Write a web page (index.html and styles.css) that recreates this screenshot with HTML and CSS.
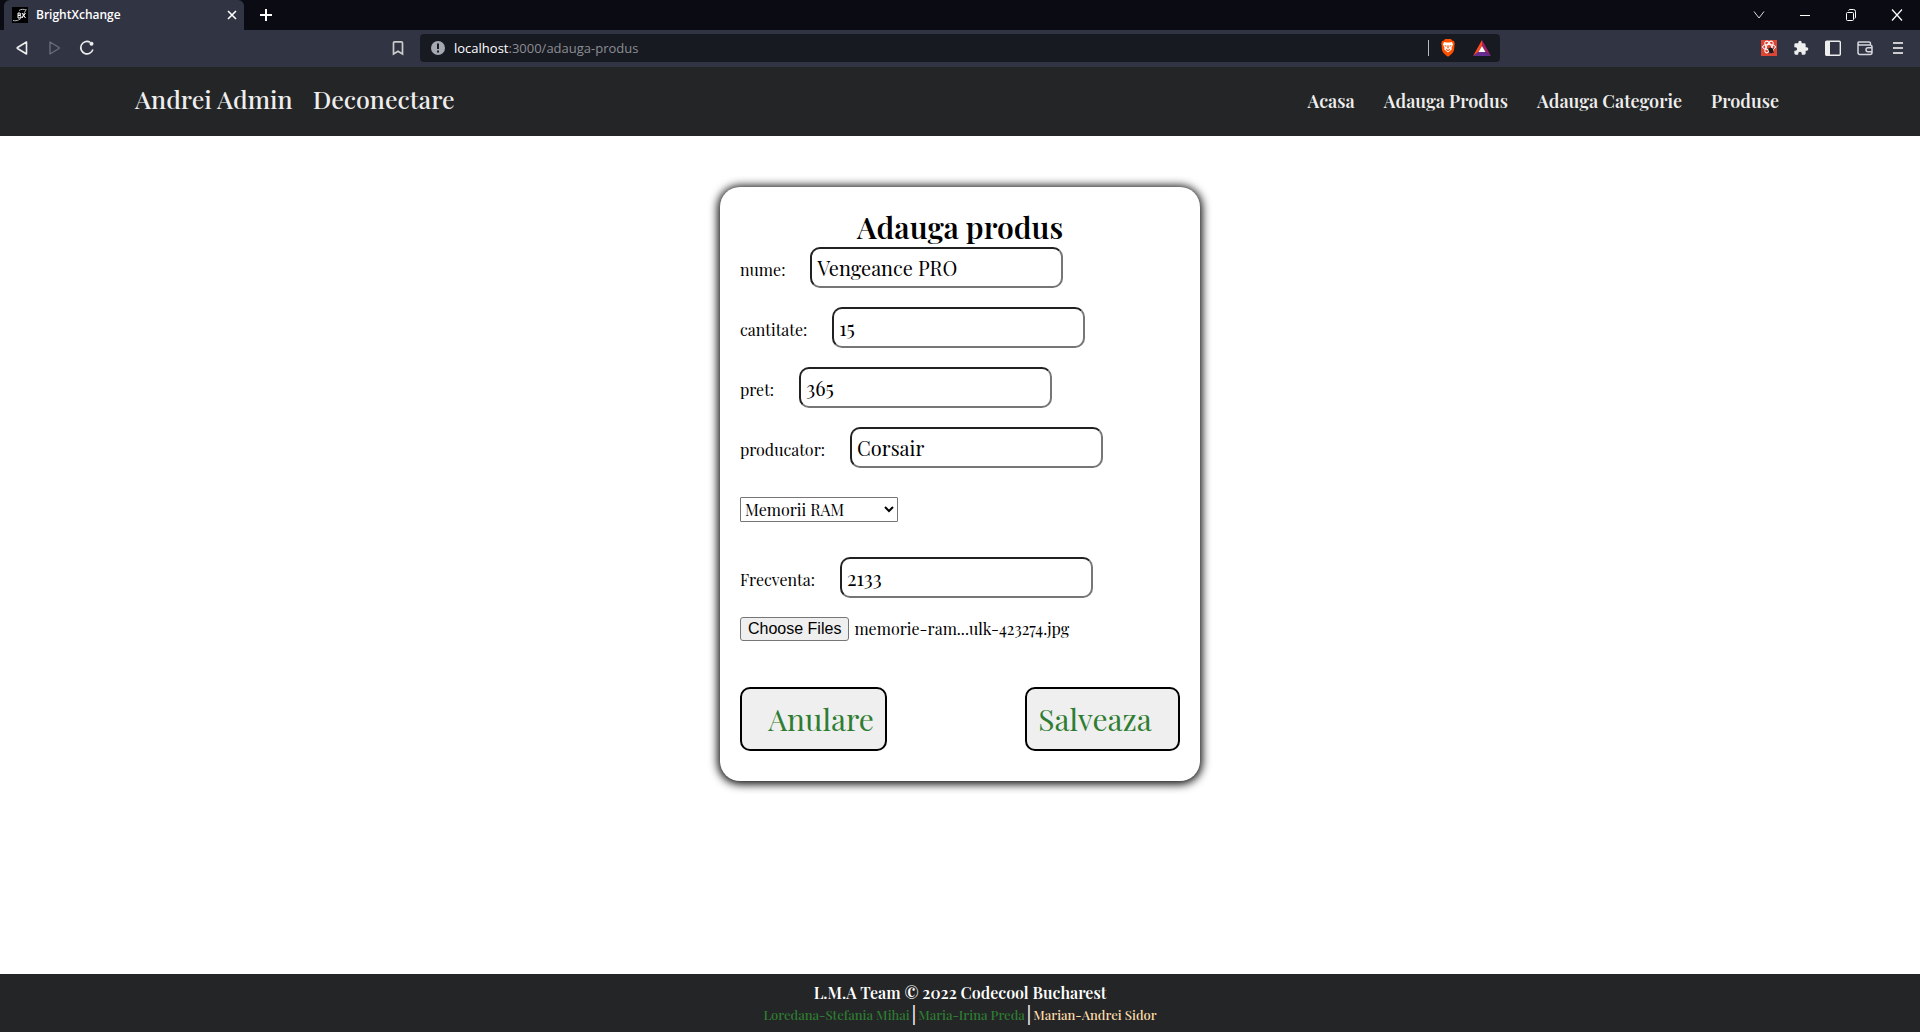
FILE: index.html
```html
<!DOCTYPE html>
<html lang="ro">
<head>
<meta charset="utf-8">
<meta name="viewport" content="width=device-width, initial-scale=1">
<title>BrightXchange</title>
<link rel="stylesheet" href="styles.css">
</head>
<body>
<div class="browser">
  <div class="tab-strip">
    <div class="tab">
      <svg class="favicon" width="16" height="16" viewBox="0 0 16 16" fill="none" aria-hidden="true">
        <rect width="16" height="16" fill="#000"/>
        <path d="M1 13.500c4 1 8-1 10-5 1-2 2-4.500 3.500-6M7 3.500c2-1.500 5-1.500 7-.500" stroke="#bbb"/>
        <path d="M6 6v5M6 6h2q1 1 0 2.300H6h2.500q1 1.500-.5 2.700H6M10 6l3.500 5M13.500 6L10 11" stroke="#fff"/>
      </svg>
      <span class="tab-title">BrightXchange</span>
      <button class="chrome-button" type="button" aria-label="Close tab">
        <svg width="10" height="10" viewBox="0 0 10 10" stroke="#fff" stroke-width="1.600"><path d="M1 1l8 8M9 1L1 9"/></svg>
      </button>
    </div>
    <button class="chrome-button new-tab" type="button" aria-label="New tab">
      <svg width="12" height="12" viewBox="0 0 12 12" stroke="#fff" stroke-width="2"><path d="M6 0v12M0 6h12"/></svg>
    </button>
    <div class="window-buttons">
      <button class="chrome-button" type="button" aria-label="Search tabs"><svg width="12" height="12" viewBox="0 0 12 12" fill="none" stroke="#ddd"><path d="M1 2.500l5 6.500 5-6.500"/></svg></button>
      <button class="chrome-button" type="button" aria-label="Minimize"><svg width="12" height="12" viewBox="0 0 12 12" stroke="#fff"><path d="M1 6.500h10"/></svg></button>
      <button class="chrome-button" type="button" aria-label="Restore"><svg width="12" height="12" viewBox="0 0 12 12" fill="none" stroke="#fff"><rect x="1.500" y="3.500" width="7" height="8" rx="1"/><path d="M3.500 1.500Q4 .5 5 .5h3.500q2 0 2 2v5.500q0 1-.7 1.500"/></svg></button>
      <button class="chrome-button" type="button" aria-label="Close"><svg width="12" height="12" viewBox="0 0 12 12" stroke="#fff" stroke-width="1.200"><path d="M1 .5l10 11M11 .5l-10 11"/></svg></button>
    </div>
  </div>
  <div class="toolbar">
    <div class="nav-buttons">
      <button class="chrome-button" type="button" aria-label="Back"><svg width="14" height="16" viewBox="0 0 14 16" fill="none" stroke="#eee" stroke-width="1.600" stroke-linejoin="round"><path d="M11.500 2v12L2.500 8.500q-.7-.5 0-1z"/></svg></button>
      <button class="chrome-button" type="button" aria-label="Forward" disabled><svg width="14" height="16" viewBox="0 0 14 16" fill="none" stroke="#6a6c7a" stroke-width="1.400" stroke-linejoin="round"><path d="M3 2v12l9-5.500q.7-.5 0-1z"/></svg></button>
      <button class="chrome-button" type="button" aria-label="Reload"><svg width="16" height="16" viewBox="0 0 16 16" fill="none" stroke="#eee" stroke-width="1.600"><path d="M11 2.200A6.200 6.200 0 1 0 13.900 9.500"/><circle cx="12.500" cy="3.800" r="2" fill="#eee" stroke="none"/></svg></button>
    </div>
    <button class="chrome-button bookmark" type="button" aria-label="Bookmark"><svg width="12" height="16" viewBox="0 0 12 16" fill="none" stroke="#ccc" stroke-width="1.700"><path d="M1.500 14V3q0-1.200 1.200-1.200h6.600q1.200 0 1.200 1.200v11L6 11.200z"/></svg></button>
    <div class="address">
      <svg width="14" height="14" viewBox="0 0 14 14" aria-hidden="true"><circle cx="7" cy="7" r="7" fill="#a5a8b0"/><path d="M6 2.500h2V8H6zM6 9.500h2v2H6z" fill="#181a20"/></svg>
      <span class="url"><span class="host">localhost</span>:3000/adauga-produs</span>
      <div class="address-end">
        <svg width="14" height="18" viewBox="0 0 14 18" aria-hidden="true"><path d="M4 0h6l1 1.500L13 2l.7 2.500L13 11q-.5 3-6 6.800Q1.500 14 1 11L.3 4.500 1 2l2-.5z" fill="#ff5000"/><path d="M3 3l2 .5h4l2-.5 1 2.500-1.500 3 .2 2L7 13.500 3.300 10.500l.2-2L2 5.500z" fill="#fff"/><path d="M3.500 6l2 .7v1l-1.500-.5zM10.500 6l-2 .7v1l1.500-.5zM6.600 6h.8l.3 3L7 9.800 6.300 9zM4.800 9.500L7 11l2.200-1.500-.4 1.500L7 12.200 5.200 11z" fill="#ff5000"/></svg>
        <svg width="18" height="16" viewBox="0 0 18 16" aria-hidden="true"><path d="M9 0v6l-3.500 6L0 16z" fill="#ff4a20"/><path d="M9 0l9 16-5.500-4L9 6z" fill="#9e1f63"/><path d="M0 16l5.500-4h7L18 16z" fill="#662d91"/><path d="M9 6l3.500 6h-7z" fill="#fff"/></svg>
      </div>
    </div>
    <div class="extensions">
      <button class="chrome-button" type="button" aria-label="React tools"><svg width="16" height="16" viewBox="0 0 16 16"><rect width="16" height="16" fill="#dd4535"/><g fill="none" stroke="#fff"><ellipse cx="8" cy="7" rx="6.500" ry="2.600"/><ellipse cx="8" cy="7" rx="6.500" ry="2.600" transform="rotate(60 8 7)"/><ellipse cx="8" cy="7" rx="6.500" ry="2.600" transform="rotate(120 8 7)"/></g><ellipse cx="10" cy="10.500" rx="2.200" ry="3" fill="#211616" transform="rotate(-25 10 10.500)"/><path d="M6.500 8.500l6.500 4M12.500 8L8 13.500" stroke="#211616"/></svg></button>
      <button class="chrome-button" type="button" aria-label="Extensions"><svg width="16" height="16" viewBox="0 0 24 24" fill="#eee"><path d="M20.500 11H19V7a2 2 0 0 0-2-2h-4V3.500a2.500 2.500 0 0 0-5 0V5H4a2 2 0 0 0-2 2v3.800h1.500a2.700 2.700 0 0 1 0 5.400H2V20a2 2 0 0 0 2 2h3.800v-1.500a2.700 2.700 0 0 1 5.400 0V22H17a2 2 0 0 0 2-2v-4h1.500a2.500 2.500 0 0 0 0-5z"/></svg></button>
      <button class="chrome-button" type="button" aria-label="Sidebar"><svg width="16" height="16" viewBox="0 0 16 16"><rect x=".7" y="1.200" width="14.600" height="14" rx="1" fill="none" stroke="#eee" stroke-width="1.400"/><path d="M1 1h4v14H1z" fill="#eee"/></svg></button>
      <button class="chrome-button" type="button" aria-label="Wallet"><svg width="16" height="16" viewBox="0 0 16 16" fill="none" stroke="#d5d6dc" stroke-width="1.500"><path d="M1 3v9.500q0 2 2 2h10q2 0 2-2V7q0-2-2-2H2.500Q1 5 1 3.300T2.500 2H12q1.500 0 1.500 1.500V5M15 7.800h-4a2 2 0 0 0 0 4h4"/></svg></button>
      <button class="chrome-button menu-button" type="button" aria-label="Menu"><svg width="10" height="14" viewBox="0 0 10 14" stroke="#ccc" stroke-width="2"><path d="M0 2h10M0 7h10M0 12h10"/></svg></button>
    </div>
  </div>
</div>

<header class="site-header">
  <nav class="account">
    <a href="#cont">Andrei Admin</a>
    <a href="#deconectare">Deconectare</a>
  </nav>
  <nav class="menu">
    <a href="#acasa">Acasa</a>
    <a href="#adauga-produs">Adauga Produs</a>
    <a href="#adauga-categorie">Adauga Categorie</a>
    <a href="#produse">Produse</a>
  </nav>
</header>

<main>
  <form class="card">
    <h1>Adauga produs</h1>
    <div class="fields">
      <div class="field"><label for="nume">nume:</label><input class="box" id="nume" type="text" value="Vengeance PRO"></div>
      <div class="field"><label for="cantitate">cantitate:</label><input class="box" id="cantitate" type="number" value="15"></div>
      <div class="field"><label for="pret">pret:</label><input class="box" id="pret" type="number" value="365"></div>
      <div class="field"><label for="producator">producator:</label><input class="box" id="producator" type="text" value="Corsair"></div>
    </div>
    <select class="category" aria-label="Categorie"><option>Memorii RAM</option></select>
    <div class="field"><label for="frecventa">Frecventa:</label><input class="box" id="frecventa" type="number" value="2133"></div>
    <div class="upload">
      <input class="file-input" id="imagini" type="file" multiple>
      <label class="file-button" for="imagini">Choose Files</label>
      <span>memorie-ram...ulk-423274.jpg</span>
    </div>
    <div class="actions">
      <button class="action cancel" type="button">Anulare</button>
      <button class="action save" type="submit">Salveaza</button>
    </div>
  </form>
</main>

<footer>
  <p class="team">L.M.A Team © 2022 Codecool Bucharest</p>
  <p class="authors"><a href="#loredana">Loredana-Stefania Mihai</a><span class="bar">|</span><a href="#maria">Maria-Irina Preda</a><span class="bar">|</span><a class="current" href="#marian">Marian-Andrei Sidor</a></p>
</footer>
</body>
</html>
```
FILE: styles.css
```css
* { box-sizing: border-box; }

body {
  margin: 0;
  min-height: 100vh;
  display: flex;
  flex-direction: column;
  background: #fff;
  color: #000;
  font-family: "Playfair Display", "Liberation Serif", serif;
  font-size: 16px;
}

a { color: inherit; text-decoration: none; }
h1, p { margin: 0; }
svg { display: block; }

/* Browser chrome */
.browser { font-family: "Segoe UI", "Open Sans", sans-serif; }

.chrome-button {
  display: flex;
  align-items: center;
  justify-content: center;
  padding: 0;
  border: 0;
  background: none;
}

.tab-strip {
  display: flex;
  align-items: center;
  height: 30px;
  padding-left: 4px;
  background: #0b0b14;
}

.tab {
  display: flex;
  align-items: center;
  gap: 8px;
  width: 240px;
  height: 30px;
  padding: 0 7px 0 8px;
  border-radius: 6px 6px 0 0;
  background: #313443;
  color: #fff;
  font-size: 12px;
  font-weight: 600;
}

.tab-title { flex: 1; padding-bottom: 1px; }
.new-tab { margin-left: 16px; }

.window-buttons {
  display: flex;
  gap: 34px;
  margin-left: auto;
  padding-right: 17px;
}

.toolbar {
  display: grid;
  grid-template-columns: 380px 40px minmax(0, 1080px) minmax(180px, 1fr);
  align-items: center;
  height: 37px;
  padding-bottom: 1px;
  background: #313443;
}

.nav-buttons { display: flex; gap: 18px; padding-left: 15px; }
.bookmark { justify-self: start; margin-left: 12px; }

.address {
  display: flex;
  align-items: center;
  gap: 9px;
  height: 28px;
  padding: 0 9px 0 11px;
  border-radius: 4px;
  background: #181a21;
}

.url { color: #8b8d94; font-size: 13px; }
.host { color: #fff; }

.address-end {
  display: flex;
  align-items: center;
  gap: 18px;
  height: 16px;
  margin-left: auto;
  padding-left: 12px;
  border-left: 1px solid #b8b9be;
}

.extensions {
  display: flex;
  justify-content: flex-end;
  gap: 16px;
  padding-right: 17px;
}

.menu-button { margin-left: 4px; }

/* Site header */
.site-header {
  display: flex;
  align-items: center;
  justify-content: space-between;
  height: 69px;
  padding: 0 141px 6px 135px;
  background: #242526;
  color: #eee;
}

.account {
  display: flex;
  gap: 20px;
  font-size: 25px;
  font-weight: 500;
}

.menu {
  display: flex;
  gap: 29px;
  padding-top: 4px;
  font-size: 18px;
  font-weight: 600;
}

/* Product form */
main { flex: 1; padding: 51px 16px; }

.card {
  width: 100%;
  max-width: 480px;
  margin: 0 auto;
  padding: 20px 20px 30px;
  border-radius: 20px;
  box-shadow: 0 1px 10px 2px #000;
}

h1 {
  font-size: 30px;
  font-weight: 600;
  line-height: 40px;
  text-align: center;
}

.fields { display: grid; gap: 19px; }
.field { display: flex; align-items: baseline; gap: 25px; }

.box {
  width: 253px;
  height: 41px;
  padding: 0 5px;
  border: 2px solid;
  border-color: #212121 #767676 #767676 #212121;
  border-radius: 10px;
  background: #fff;
  color: #000;
  font-family: inherit;
  font-size: 20px;
  appearance: textfield;
}

.category {
  display: block;
  width: 158px;
  height: 25px;
  margin: 29px 0 35px;
  padding: 0;
  border: 1px solid #767676;
  border-radius: 1px;
  background: #fff;
  color: #000;
  font-family: inherit;
  font-size: 16px;
}

.upload {
  display: flex;
  align-items: center;
  gap: 5px;
  height: 24px;
  margin-top: 19px;
  line-height: 20px;
}

.file-input {
  position: absolute;
  width: 1px;
  height: 1px;
  opacity: 0;
}

.file-button {
  height: 24px;
  padding: 0 7px;
  border: 1px solid #767676;
  border-radius: 3px;
  background: #efefef;
  font: 16px/22px "Liberation Sans", sans-serif;
}

.actions {
  display: flex;
  justify-content: space-between;
  margin-top: 46px;
}

.action {
  height: 64px;
  border: 2px solid #000;
  border-radius: 10px;
  background: #efefef;
  color: #2e7d32;
  font-family: inherit;
  font-size: 30px;
}

.cancel { width: 147px; padding: 0 11px 0 26px; }
.save { width: 155px; padding: 0 26px 0 11px; }

/* Footer */
footer {
  height: 58px;
  padding-top: 8px;
  background: #242526;
  color: #fff;
  font-weight: 600;
  text-align: center;
}

.team { font-size: 16px; line-height: 22px; }

.authors {
  display: flex;
  align-items: center;
  justify-content: center;
  gap: 2px;
  color: #2e7d32;
  font-size: 13px;
  line-height: 22px;
}

.authors a { font-weight: 500; }
.authors .current { color: #ffdcaa; }
.bar { font-size: 18px; color: #fff; }
```
